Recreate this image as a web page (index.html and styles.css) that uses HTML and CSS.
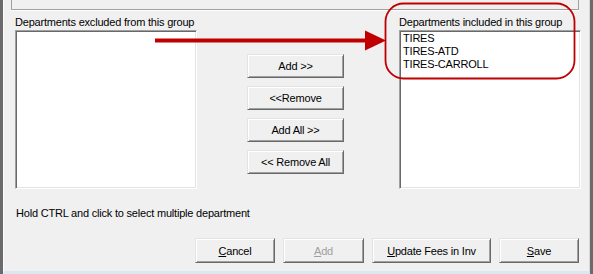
FILE: index.html
```html
<!DOCTYPE html>
<html lang="en">
<head>
    <meta charset="UTF-8">
    <title>Department group</title>
    <link rel="stylesheet" href="styles.css">
</head>
<body>
    <div class="window">
        <div class="client">
            <div class="top-panel"></div>

            <div class="lists">
                <div class="list-col">
                    <div class="caption">Departments excluded from this group</div>
                    <div class="listbox"></div>
                </div>

                <!-- move buttons between the two lists -->
                <div class="move-buttons">
                    <button class="btn">Add &gt;&gt;</button>
                    <button class="btn">&lt;&lt;Remove</button>
                    <button class="btn">Add All &gt;&gt;</button>
                    <button class="btn">&lt;&lt; Remove All</button>
                </div>

                <div class="list-col">
                    <div class="caption">Departments included in this group</div>
                    <div class="listbox">
                        <div class="item">TIRES</div>
                        <div class="item">TIRES-ATD</div>
                        <div class="item">TIRES-CARROLL</div>
                    </div>
                </div>
            </div>

            <div class="hint">Hold CTRL and click to select multiple department</div>

            <div class="actions">
                <button class="btn btn-cancel"><u>C</u>ancel</button>
                <button class="btn btn-add" disabled><u>A</u>dd</button>
                <button class="btn btn-update"><u>U</u>pdate Fees in Inv</button>
                <button class="btn btn-save"><u>S</u>ave</button>
            </div>
        </div>

        <!-- red annotation drawn over the form -->
        <svg class="markup" width="593" height="274" viewBox="0 0 593 274">
            <line x1="155" y1="40.5" x2="368" y2="40.5" stroke="#c00000" stroke-width="4"/>
            <polygon points="365,30.5 386,40.5 365,50.5" fill="#c00000"/>
            <rect x="385.5" y="3.5" width="189" height="75" rx="18" ry="18" fill="none" stroke="#c00000" stroke-width="1.8"/>
        </svg>
    </div>
</body>
</html>
```

FILE: styles.css
```css
body {
    margin: 0;
    background-color: #f0f0f0;
    font-family: "Liberation Sans", Arial, sans-serif;
    font-size: 11px;
    letter-spacing: -0.2px;
    color: #000;
}
.window {
    position: relative;
    width: 593px;
    height: 274px;
    box-sizing: border-box;
    border-left: 3px solid #6b6b6b;
    border-right: 3px solid #6b6b6b;
}
.client {
    height: 100%;
    box-sizing: border-box;
    border-left: 1px solid #fcfcfc;
    border-right: 1px solid #d8d8d8;
    border-bottom: 3px solid #dce7f4;
}
.top-panel {
    height: 9px;
    margin: 0 10px 0 7px;
    border: 1px solid #a0a0a0;
    border-top: none;
    box-shadow: 0 1px 0 #fff;
}
.lists {
    display: flex;
    margin-top: 5px;
    padding-left: 11px;
}
.list-col {
    width: 182px;
}
.caption {
    line-height: 15px;
    height: 15px;
    white-space: nowrap;
}
.listbox {
    height: 159px;
    box-sizing: border-box;
    background-color: #fff;
    border: 1px solid;
    border-color: #a0a0a0 #fff #fff #a0a0a0;
    box-shadow: inset 1px 1px 0 #696969, inset -1px -1px 0 #e3e3e3;
    padding: 1px 0 0 3px;
}
.item {
    line-height: 13px;
    white-space: nowrap;
}
.move-buttons {
    display: flex;
    flex-direction: column;
    gap: 8px;
    width: 97px;
    margin: 39px 55px 0 50px;
}
.btn {
    height: 24px;
    padding: 0;
    background-color: #f0f0f0;
    font-family: inherit;
    font-size: 11px;
    letter-spacing: -0.2px;
    color: #000;
    border: 1px solid;
    border-color: #e3e3e3 #696969 #696969 #e3e3e3;
    box-shadow: inset 1px 1px 0 #fff, inset -1px -1px 0 #a0a0a0;
    border-radius: 0;
}
.btn:disabled {
    color: #a0a0a0;
}
.hint {
    margin-top: 18px;
    padding-left: 12px;
    line-height: 13px;
}
.actions {
    display: flex;
    justify-content: flex-end;
    gap: 8px;
    margin-top: 18px;
    padding-right: 10px;
}
.actions .btn {
    height: 25px;
    width: 80px;
}
.actions .btn-add {
    width: 81px;
}
.actions .btn-update {
    width: 119px;
}
.markup {
    position: absolute;
    left: -3px;
    top: 0;
    pointer-events: none;
}
```
